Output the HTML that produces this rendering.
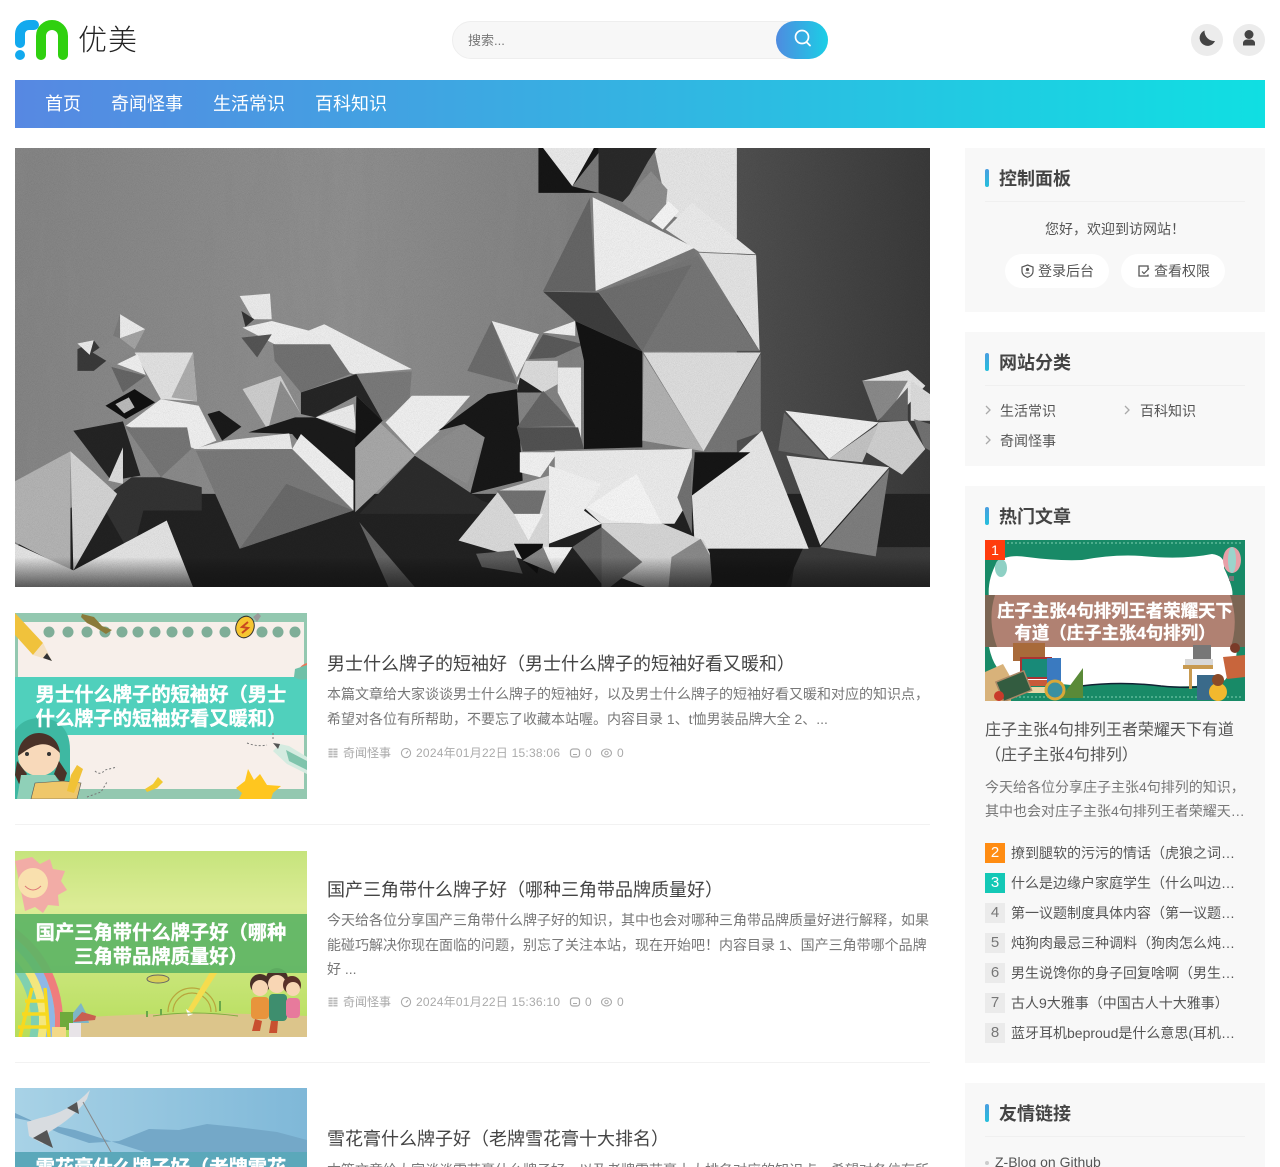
<!DOCTYPE html>
<html lang="zh-CN"><head><meta charset="utf-8"><title>优美</title>
<style>
html{margin:0;padding:0;background:#fff;width:1280px;height:1167px;overflow:hidden}
body{margin:0;padding:0;background:#fff;width:1280px;height:1167px;overflow:hidden;font-family:"Liberation Sans","Noto Sans CJK SC",sans-serif;color:#555}
#p{position:relative;width:1280px;height:1167px;overflow:hidden}
.a{position:absolute;white-space:nowrap}
svg{position:absolute;display:block;overflow:hidden}
.nav{font-size:18px;color:#fff;top:92px;line-height:24px}
.box{position:absolute;left:965px;width:300px;background:#f8f8f8}
.bar{position:absolute;left:985px;width:4px;height:18px;border-radius:2px;background:linear-gradient(#4a9ee0,#25bfdc)}
.st{position:absolute;left:999px;font-size:18px;line-height:24px;font-weight:700;color:#444;white-space:nowrap}
.ln{position:absolute;left:985px;width:260px;height:1px;background:#f0f0f0}
.t{font-size:18px;color:#444;left:327px;line-height:24px}
.s{font-size:14px;color:#777;left:327px;line-height:25px}
.m{font-size:12px;color:#aaa;line-height:16px}
.d{letter-spacing:.24px}
.hr{position:absolute;left:15px;width:915px;height:1px;background:#f2f2f2}
.btn{position:absolute;top:254px;width:104px;height:34px;border-radius:17px;background:#fff}
.n{position:absolute;left:985px;width:20px;height:20px;font:15px/20px "Liberation Sans",sans-serif;text-align:center;background:#ebebeb;color:#777}
.h{position:absolute;left:1011px;width:226px;font-size:14px;line-height:20px;color:#555;white-space:nowrap;overflow:hidden;text-overflow:ellipsis}
.c{font-size:13px;color:#555;line-height:20px}
.b{stroke:#fff;stroke-width:.35px}
</style></head><body><div id="p">

<svg style="left:10px;top:15px" width="65" height="50" viewBox="10 15 65 50"><path d="M41 55V36A11 11 0 0 1 63 36V55" fill="none" stroke="#2fd00f" stroke-width="10" stroke-linecap="round"/><path d="M20 43V34A9 9 0 0 1 29 25H34" fill="none" stroke="#12a9ee" stroke-width="10" stroke-linecap="round"/><circle cx="20" cy="55" r="5" fill="#12a9ee"/></svg>
<div class="a" style="left:78px;top:21px;font-size:29px;line-height:40px;color:#222;font-weight:300;letter-spacing:1px">优美</div>

<div class="a" style="left:452px;top:21px;width:374px;height:36px;border:1px solid #eee;border-radius:19px;background:#f7f7f7"></div>
<div class="a" style="left:468px;top:32px;font-size:13px;line-height:18px;color:#777">搜索...</div>
<div class="a" style="left:776px;top:21px;width:52px;height:38px;border-radius:19px;background:linear-gradient(90deg,#4e8be0,#1bcfe6)"></div>
<svg style="left:790px;top:26px" width="26" height="26" viewBox="0 0 26 26"><circle cx="12" cy="11" r="6.500" fill="none" stroke="#fff" stroke-width="1.700"/><path d="M17 16.500l3 3" stroke="#fff" stroke-width="1.800" stroke-linecap="round"/></svg>

<div class="a" style="left:1191px;top:24px;width:32px;height:32px;border-radius:50%;background:#ececec"></div>
<svg style="left:1191px;top:24px" width="32" height="32" viewBox="0 0 32 32"><path d="M13.500 6.500A8 8 0 1 0 24 17 10 10 0 0 1 13.500 6.500Z" fill="#444"/></svg>
<div class="a" style="left:1233px;top:24px;width:32px;height:32px;border-radius:50%;background:#ececec"></div>
<svg style="left:1233px;top:24px" width="32" height="32" viewBox="0 0 32 32"><circle cx="16" cy="10.500" r="4.500" fill="#444"/><path d="M10 21.500v-2.500c0-2 2-3.500 4-3.500h4c2 0 4 1.500 4 3.500v2.500Z" fill="#444"/></svg>

<div class="a" style="left:15px;top:80px;width:1250px;height:48px;background:linear-gradient(90deg,#5788e2,#10dfe2)"></div>
<div class="a nav" style="left:45px">首页</div>
<div class="a nav" style="left:111px">奇闻怪事</div>
<div class="a nav" style="left:213px">生活常识</div>
<div class="a nav" style="left:315px">百科知识</div>

<!-- hero -->
<svg style="left:15px;top:148px" width="915" height="439" viewBox="0 0 1568 1320" preserveAspectRatio="none">
<defs>
<linearGradient id="w" x1="0" x2="1" y1="0" y2="0"><stop offset="0" stop-color="#858585"/><stop offset=".45" stop-color="#909090"/><stop offset=".8" stop-color="#808080"/><stop offset="1" stop-color="#747474"/></linearGradient>
<linearGradient id="r" x1="0" x2="1" y1="0" y2="0"><stop offset="0" stop-color="#505050"/><stop offset="1" stop-color="#3a3a3a"/></linearGradient>
<linearGradient id="f" x1="0" x2="0" y1="0" y2="1"><stop offset="0" stop-color="#000" stop-opacity="0"/><stop offset="1" stop-color="#111" stop-opacity=".65"/></linearGradient>
<filter id="st" x="0" y="0" width="100%" height="100%"><feTurbulence type="fractalNoise" baseFrequency=".035 .004" numOctaves="3" seed="4"/><feColorMatrix values="0 0 0 0 .25 0 0 0 0 .25 0 0 0 0 .25 .8 0 0 0 -.3"/></filter>
<filter id="gr" x="0" y="0" width="100%" height="100%"><feTurbulence type="fractalNoise" baseFrequency=".7" numOctaves="2" seed="2"/><feColorMatrix values="0 0 0 0 0 0 0 0 0 0 0 0 0 0 0 .9 0 0 0 -.32"/></filter>
</defs>
<rect width="1240" height="1320" fill="url(#w)"/>
<rect width="1240" height="1000" filter="url(#st)"/>
<rect x="1237" width="331" height="1320" fill="url(#r)"/>
<path d="M1095 0H1237V272L1120 200Z" fill="#e6e6e6"/>
<!-- floor shadow -->
<path d="M130 1040H1568V1320H0V1200Z" fill="#222"/>
<path d="M1340 1200H1568V1320H1330Z" fill="#3c3c3c"/>
<!-- left cluster -->
<path d="M107 605L135 578 160 635 135 670H107Z" fill="#3a3a3a"/><path d="M107 588L135 578 128 622Z" fill="#eaeaea"/>
<path d="M180 500L223 545 180 572Z" fill="#ececec"/><path d="M180 500L168 565 180 572Z" fill="#7c7c7c"/><path d="M180 572L223 545 205 605Z" fill="#a4a4a4"/>
<path d="M133 615L172 568 205 605 168 652Z" fill="#8a8a8a"/>
<path d="M205 615H305L312 762 250 755Z" fill="#e2e2e2"/><path d="M305 615L312 762 268 750Z" fill="#aeaeae"/>
<path d="M175 650L210 620 224 682Z" fill="#f0f0f0"/><path d="M165 658L224 685 185 735Z" fill="#666"/>
<path d="M155 775L205 725 240 765 190 815Z" fill="#111"/><path d="M172 770L195 750 205 780 187 798Z" fill="#bbb"/>
<path d="M190 835L250 755 315 775 345 880 310 905Z" fill="#f0f0f0"/>
<path d="M330 800L350 790 388 838 355 880Z" fill="#1a1a1a"/>
<path d="M100 850L185 822 215 985 165 1000Z" fill="#242424"/>
<path d="M160 1000L185 900V1010Z" fill="#ddd"/>
<path d="M190 840H295L302 905 250 990Z" fill="#767676"/>
<path d="M145 1060L200 990H250L320 1020V1090H220L200 1228Z" fill="#333"/>
<path d="M0 1002L95 912V1270L0 1185Z" fill="#b4b4b4"/><path d="M95 912L175 1040 100 1270Z" fill="#d4d4d4"/>
<path d="M0 1190L100 1270 260 1120 305 1320H0Z" fill="#e4e4e4"/>
<!-- second cluster -->
<path d="M385 445L437 438 440 515 408 515Z" fill="#ececec"/><path d="M388 490L410 515 395 538Z" fill="#333"/>
<path d="M390 540L440 520 505 550 445 590Z" fill="#f0f0f0"/><path d="M388 570L440 560 415 630Z" fill="#555"/>
<path d="M445 590L530 530 680 665 580 680Z" fill="#eeeeee"/>
<path d="M442 590H540L575 680 490 735 445 640Z" fill="#727272"/>
<path d="M575 680L680 672 675 780 630 820Z" fill="#7a7a7a"/>
<path d="M390 725L455 685 490 800 430 838Z" fill="#cecece"/><path d="M455 700L490 800 435 838Z" fill="#8e8e8e"/>
<path d="M490 735L585 680 630 820 585 745 515 810 490 800Z" fill="#262626"/>
<path d="M515 810L580 770 585 850Z" fill="#ececec"/>
<path d="M400 855L480 810H515L585 860V1090L475 860Z" fill="#1b1b1b"/>
<path d="M305 905L360 880 470 858 475 905Z" fill="#ececec"/>
<path d="M310 910L475 905 580 1090 385 1205Z" fill="#7a7a7a"/><path d="M385 1205L465 1010 580 1090Z" fill="#6a6a6a"/>
<path d="M475 905L490 860 580 1000V1090Z" fill="#f0f0f0"/>
<path d="M590 1100L685 925 800 1060 860 1100Z" fill="#2c2c2c"/>
<path d="M583 1095V900L625 825 685 925Z" fill="#a8a8a8"/>
<path d="M585 745L630 820 583 900Z" fill="#161616"/>
<path d="M635 825L680 745H780L728 850 685 920Z" fill="#f0f0f0"/>
<path d="M685 925L770 830 805 870 775 1010Z" fill="#8e8e8e"/>
<path d="M725 850L810 740 860 725 870 1000 780 1040 805 870 770 830Z" fill="#181818"/>
<path d="M590 1125L685 1320H640Z" fill="#666"/>
<!-- center small -->
<path d="M817 520L775 670 860 710Z" fill="#6c6c6c"/><path d="M817 520L898 560 860 690Z" fill="#eeeeee"/>
<path d="M905 560L975 590 925 630 880 635Z" fill="#5a5a5a"/><path d="M960 520V565L905 555Z" fill="#f0f0f0"/>
<path d="M875 640H930V710L905 735 860 710Z" fill="#dcdcdc"/><path d="M865 690L905 735H860Z" fill="#222"/>
<path d="M905 730L960 835 860 840Z" fill="#646464"/>
<path d="M930 660H970V900L960 835 930 735Z" fill="#ececec"/>
<path d="M860 840H965L975 905 870 912Z" fill="#525252"/>
<!-- tower -->
<path d="M897 0H1000V135H897Z" fill="#161616"/><path d="M905 0H992L955 115Z" fill="#eaeaea"/><path d="M1000 15L955 115 1000 135 1045 100Z" fill="#7c7c7c"/>
<path d="M1000 0H1100L1085 40 1045 165 1000 135Z" fill="#2a2a2a"/>
<path d="M1090 70L1118 125 1115 180 1085 220 1040 165Z" fill="#8e8e8e"/>
<path d="M960 520L1075 612V900L975 905 975 640Z" fill="#141414"/>
<path d="M905 432L1000 435 1075 612 960 520Z" fill="#3e3e3e"/>
<path d="M1160 165L1270 320 1172 312 1115 245Z" fill="#ebebeb"/>
<path d="M1120 160L1138 190 1110 245 1090 220Z" fill="#f6f6f6"/>
<path d="M1172 315L1270 322 1276 610Z" fill="#e4e4e4"/>
<path d="M1000 432L1170 325 1276 610H1075Z" fill="#767676"/>
<path d="M1000 432L1160 350 1075 610Z" fill="#6e6e6e"/>
<path d="M990 148L1165 300 995 430Z" fill="#f0f0f0"/>
<path d="M985 150L995 432 905 430Z" fill="#666"/>
<path d="M1077 615H1278L1180 912Z" fill="#dedede"/>
<path d="M1278 620V855L1180 915Z" fill="#767676"/>
<path d="M1077 620L1180 912 1075 880Z" fill="#b2b2b2"/>
<!-- right -->
<path d="M1320 790L1480 825 1395 935Z" fill="#f0f0f0"/><path d="M1318 795L1392 935 1308 910Z" fill="#686868"/>
<path d="M1452 700L1530 668 1560 715 1505 820Z" fill="#e4e4e4"/><path d="M1452 700H1530L1500 790 1478 820Z" fill="#8a8a8a"/><path d="M1530 720V820H1480Z" fill="#626262"/>
<path d="M1535 700L1568 740V820H1535Z" fill="#dcdcdc"/>
<path d="M1480 825L1530 820 1560 905 1520 982 1450 905Z" fill="#d0d0d0"/><path d="M1540 815L1568 830V910L1558 900Z" fill="#727272"/>
<path d="M1395 935L1480 830 1452 945Z" fill="#c4c4c4"/>
<path d="M1160 1045L1280 850 1360 1205H1165Z" fill="#e8e8e8"/>
<path d="M1322 925L1498 960 1380 1195Z" fill="#e4e4e4"/>
<path d="M1498 965L1475 1228 1380 1200Z" fill="#7e7e7e"/>
<path d="M1165 915H1260L1160 1045Z" fill="#161616"/>
<!-- lower center -->
<path d="M865 915H930L900 990 865 975Z" fill="#f2f2f2"/>
<path d="M925 912L1160 905V1045L1130 1130H1005L925 1000Z" fill="#ececec"/>
<path d="M1135 1050L1160 930V1160Z" fill="#727272"/>
<path d="M760 1180L830 1030 915 985V1260Z" fill="#dadada"/>
<path d="M825 1030H910L895 1125 855 1100Z" fill="#727272"/>
<path d="M855 1100H905L880 1180Z" fill="#f4f4f4"/>
<path d="M915 955L1005 1010 975 1090 1005 1130 915 1190Z" fill="#f2f2f2"/>
<path d="M980 1080L1065 980 1110 1135 1020 1120Z" fill="#f6f6f6"/>
<path d="M855 1190H905L895 1280 870 1240Z" fill="#111"/>
<path d="M905 1200H955L925 1280Z" fill="#f4f4f4"/><path d="M870 1240L905 1200 925 1280Z" fill="#868686"/>
<path d="M1005 1130H1110L1180 1180 1205 1270 1190 1320H1080L1005 1270Z" fill="#d6d6d6"/>
<path d="M1125 1230L1175 1175 1205 1270 1190 1320H1120Z" fill="#8a8a8a"/>
<path d="M955 1200L1005 1140V1310Z" fill="#626262"/>
<path d="M1005 1140L1075 1245 1020 1320H1005Z" fill="#727272"/>
<path d="M790 1220L855 1210 870 1280 800 1260Z" fill="#606060"/>
<path d="M1190 1205H1350L1320 1320H1195Z" fill="#1a1a1a"/>
<rect width="1568" height="1320" filter="url(#gr)" opacity=".2"/>
<rect y="1230" width="1568" height="90" fill="url(#f)"/>
</svg>

<!-- article 1 -->
<svg style="left:15px;top:613px" width="292" height="186" viewBox="0 0 292 186">
<rect width="292" height="186" fill="#f7efea"/>
<path d="M0 0H292V9H0ZM0 0H3V186H0ZM0 176H292V186H0ZM289 0H292V186H289Z" fill="#93c8b0"/>
<g fill="#7fae98"><circle cx="34" cy="19" r="5.500"/><circle cx="53" cy="19" r="5.500"/><circle cx="72" cy="19" r="5.500"/><circle cx="90" cy="19" r="5.500"/><circle cx="107" cy="19" r="5.500"/><circle cx="123" cy="19" r="5.500"/><circle cx="140" cy="19" r="5.500"/><circle cx="157" cy="19" r="5.500"/><circle cx="173" cy="19" r="5.500"/><circle cx="192" cy="19" r="5.500"/><circle cx="210" cy="19" r="5.500"/><circle cx="247" cy="19" r="5.500"/><circle cx="263" cy="19" r="5.500"/><circle cx="280" cy="19" r="5.500"/></g>
<path d="M0 0L28 30 18 42 0 22Z" fill="#f0c23c"/><path d="M28 30L37 48 18 42Z" fill="#f4e0c0"/><path d="M32 40L37 48 28 45Z" fill="#333"/>
<path d="M67 1l12 3 8 9 10 4-6 4-11-7-8-4-6-6Z" fill="#8a7a3a"/>
<ellipse cx="230" cy="14" rx="9" ry="11" fill="#f6c531" stroke="#333" transform="rotate(20 230 14)"/><path d="M233 9l-6 5 6 1-6 5" fill="none" stroke="#c9491f" stroke-width="2"/><path d="M238 4l5-4 3 3-4 6Z" fill="#999"/>
<path d="M292 50c-8 2-11 10-10 18 0 6 4 12 10 13Z" fill="#e8785a"/>
<rect y="64" width="292" height="58" fill="#50d0bc"/>
<path d="M279 64q6 4 13 2v-14l-12 4Z" fill="#6fc0a8"/>
<path d="M265 131l9 2 18 11v17l-20-10-14-13Z" fill="#d4ebe0"/><path d="M271 137l21 11v9l-18-9Z" fill="#7fc4ac"/><path d="M258 130l7 1-2 5Z" fill="#555"/>
<path d="M233 156l-3 12-9 7 6 5-3 6h32l2-6 8-7-14-1-7-11-6 6Z" fill="#ffc61f"/>
<path d="M130 176l8-5 5-7 5 5-6 6-10 4Z" fill="#f2c92f"/>
<path d="M232 130q10 4 20 2M258 120v6M80 158q5 5 10-1l12-3M72 184l14-5 6-10" fill="none" stroke="#777" stroke-dasharray="2 2"/>
<path d="M-4 186V135c0-22 14-30 29-30s30 8 30 32v49Z" fill="#3eb8a2"/>
<ellipse cx="24" cy="143" rx="21" ry="20" fill="#f8d9ba"/>
<path d="M3 143c0-14 10-23 21-23s20 8 21 20c-8-8-14-10-22-8-6 1-13 6-20 11Z" fill="#4a3228"/>
<circle cx="12" cy="141" r="2" fill="#333"/><circle cx="34" cy="141" r="2" fill="#333"/>
<path d="M2 148l-2 14 4 9 8-10ZM44 148l8 12-4 12-9-11Z" fill="#4a3228"/>
<path d="M6 162h34l8 14 4 10H2Z" fill="#8fd0b8"/>
<path d="M16 186l4-16 28-2 18 2-4 16Z" fill="#efc76a" stroke="#555" stroke-width=".6"/>
<path d="M52 178l4-16 6-10 6 4-5 14-4 10Z" fill="#f1c236"/>
<text class="b" x="146" y="88" text-anchor="middle" font-size="19.300" font-weight="700" fill="#fff">男士什么牌子的短袖好（男士</text>
<text class="b" x="146" y="112" text-anchor="middle" font-size="19.300" font-weight="700" fill="#fff">什么牌子的短袖好看又暖和）</text>
</svg>
<div class="a t" style="top:652px">男士什么牌子的短袖好（男士什么牌子的短袖好看又暖和）</div>
<div class="a s" style="top:682px">本篇文章给大家谈谈男士什么牌子的短袖好，以及男士什么牌子的短袖好看又暖和对应的知识点，</div>
<div class="a s" style="top:707px">希望对各位有所帮助，不要忘了收藏本站喔。内容目录 1、t恤男装品牌大全 2、...</div>
<svg style="left:327px;top:747px" width="12" height="12" viewBox="0 0 12 12"><path d="M1.500 1.500h9v9h-9z" fill="#bbb"/><path d="M6 1v10M1 6h10M1 3.500h10M1 8.500h10" stroke="#fff" stroke-width=".7"/></svg>
<div class="a m" style="left:343px;top:745px">奇闻怪事</div>
<svg style="left:400px;top:747px" width="12" height="12" viewBox="0 0 12 12"><circle cx="6" cy="6" r="4.600" fill="none" stroke="#aaa" stroke-width="1.100"/><path d="M8 4L6 6.500" stroke="#aaa" stroke-width="1.100"/></svg>
<div class="a m d" style="left:416px;top:745px">2024年01月22日 15:38:06</div>
<svg style="left:569px;top:747px" width="12" height="12" viewBox="0 0 12 12"><rect x="1.500" y="2" width="9" height="8" rx="2.500" fill="none" stroke="#aaa" stroke-width="1.200"/><path d="M4 7.500h4" stroke="#aaa"/></svg>
<div class="a m" style="left:585px;top:745px">0</div>
<svg style="left:600px;top:747px" width="13" height="12" viewBox="0 0 13 12"><ellipse cx="6.500" cy="6" rx="5" ry="4" fill="none" stroke="#aaa" stroke-width="1.100"/><circle cx="6.500" cy="6" r="1.700" fill="none" stroke="#aaa"/></svg>
<div class="a m" style="left:617px;top:745px">0</div>
<div class="hr" style="top:824px"></div>

<!-- article 2 -->
<svg style="left:15px;top:851px" width="292" height="186" viewBox="0 0 292 186">
<defs><linearGradient id="g2" x1="0" y1="0" x2="0" y2="1"><stop offset="0" stop-color="#c6e47c"/><stop offset=".3" stop-color="#dcec96"/><stop offset="1" stop-color="#b6de5c"/></linearGradient></defs>
<rect width="292" height="186" fill="url(#g2)"/>
<g fill="none" stroke-width="8"><circle cx="-66" cy="170" r="110" stroke="#ef7d7d"/><circle cx="-66" cy="170" r="102" stroke="#8fb8e6"/><circle cx="-66" cy="170" r="94" stroke="#f4e77d"/><circle cx="-66" cy="170" r="86" stroke="#7fd0b0"/></g>
<path d="M60 167q110-8 232-2v21H60Z" fill="#dcc58b"/>
<path d="M17 6l8 7 10-5 3 10 12 2-4 10 6 9-9 5 1 11-11-1-5 8-8-6-10 4L0 10Z" fill="#f2aca6"/><circle cx="18" cy="32" r="15" fill="#f9e0ae"/><path d="M10 35q8 8 16 0" fill="none" stroke="#d77"/>
<path d="M17 137l-12 49M30 137l4 49M10 150h22M7 163h26M3 176h32" stroke="#f7d91f" stroke-width="3.500" fill="none"/>
<rect x="45" y="161" width="14" height="18" fill="#6eaa3c"/><rect x="37" y="176" width="14" height="10" fill="#f3d988"/><rect x="54" y="172" width="12" height="14" fill="#e8e4e8"/>
<path d="M58 172h16l-2-8-6-12-8 10Z" fill="#7eb6c6"/><path d="M58 171l22-2 1-4-14-4Z" fill="#c95f50"/>
<g fill="none" stroke="#b8a63c" stroke-width="1.200"><path d="M158 161a19 19 0 0 1 38 0"/><path d="M153 161a24 24 0 0 1 48 0"/></g>
<path d="M172 160l26-44 6 3-28 44-5-1Z" fill="#f5dc4e"/><path d="M171 158l2 7 5-2Z" fill="#fff"/>
<path d="M138 165q40-6 85 0" fill="none" stroke="#7eae40"/>
<ellipse cx="143" cy="128" rx="11" ry="4" fill="#d8cf58" stroke="#666"/><path d="M205 150v10M146 158v6M132 160v6" stroke="#6aa84a" stroke-width="2"/>
<circle cx="245" cy="133" r="10" fill="#4a3028"/><circle cx="245" cy="137" r="8" fill="#f8d6b4"/>
<circle cx="262" cy="128" r="11" fill="#4a3028"/><circle cx="262" cy="133" r="9" fill="#f8d6b4"/>
<circle cx="277" cy="134" r="9" fill="#5a3028"/><circle cx="278" cy="138" r="7" fill="#f8d6b4"/>
<rect x="236" y="146" width="18" height="22" rx="4" fill="#e8943c"/><rect x="254" y="143" width="18" height="27" rx="4" fill="#3e8e6e"/><rect x="271" y="147" width="14" height="20" rx="4" fill="#e77a9c"/>
<path d="M240 168l-3 12h8l2-10ZM256 170l-2 12h8l1-12Z" fill="#c85030"/>
<rect y="63" width="292" height="59" fill="#5fb565" opacity=".93"/>
<text class="b" x="146" y="88" text-anchor="middle" font-size="19.300" font-weight="700" fill="#fff">国产三角带什么牌子好（哪种</text>
<text class="b" x="146" y="112" text-anchor="middle" font-size="19.300" font-weight="700" fill="#fff">三角带品牌质量好）</text>
</svg>
<div class="a t" style="top:878px">国产三角带什么牌子好（哪种三角带品牌质量好）</div>
<div class="a s" style="top:908px">今天给各位分享国产三角带什么牌子好的知识，其中也会对哪种三角带品牌质量好进行解释，如果</div>
<div class="a s" style="top:933px">能碰巧解决你现在面临的问题，别忘了关注本站，现在开始吧！内容目录 1、国产三角带哪个品牌</div>
<div class="a s" style="top:957px">好 ...</div>
<svg style="left:327px;top:996px" width="12" height="12" viewBox="0 0 12 12"><path d="M1.500 1.500h9v9h-9z" fill="#bbb"/><path d="M6 1v10M1 6h10M1 3.500h10M1 8.500h10" stroke="#fff" stroke-width=".7"/></svg>
<div class="a m" style="left:343px;top:994px">奇闻怪事</div>
<svg style="left:400px;top:996px" width="12" height="12" viewBox="0 0 12 12"><circle cx="6" cy="6" r="4.600" fill="none" stroke="#aaa" stroke-width="1.100"/><path d="M8 4L6 6.500" stroke="#aaa" stroke-width="1.100"/></svg>
<div class="a m d" style="left:416px;top:994px">2024年01月22日 15:36:10</div>
<svg style="left:569px;top:996px" width="12" height="12" viewBox="0 0 12 12"><rect x="1.500" y="2" width="9" height="8" rx="2.500" fill="none" stroke="#aaa" stroke-width="1.200"/><path d="M4 7.500h4" stroke="#aaa"/></svg>
<div class="a m" style="left:585px;top:994px">0</div>
<svg style="left:600px;top:996px" width="13" height="12" viewBox="0 0 13 12"><ellipse cx="6.500" cy="6" rx="5" ry="4" fill="none" stroke="#aaa" stroke-width="1.100"/><circle cx="6.500" cy="6" r="1.700" fill="none" stroke="#aaa"/></svg>
<div class="a m" style="left:617px;top:994px">0</div>
<div class="hr" style="top:1062px"></div>

<!-- article 3 -->
<svg style="left:15px;top:1088px" width="292" height="79" viewBox="0 0 292 79">
<defs><linearGradient id="g3" x1="0" y1="0" x2="1" y2="0"><stop offset="0" stop-color="#a8d2e6"/><stop offset="1" stop-color="#7fb8d8"/></linearGradient></defs>
<rect width="292" height="79" fill="url(#g3)"/>
<path d="M0 30l60 12 70 22h162V52l-30-8-40-5-30-3-28 6-30-1-30 12-30 2-30-10L0 25Z" fill="#74a8c8"/>
<path d="M25 30q30-6 50-28l-3 9q-12 18-38 33l-6 12-14-8-2-14Z" fill="#d8dce0"/>
<path d="M52 20l10-6 2 12ZM18 50l14-8 6 18Z" fill="#555"/>
<path d="M68 14l28 50" stroke="#888" fill="none"/>
<rect y="64" width="292" height="15" fill="#5ba8ba"/>
<text class="b" x="146" y="86" text-anchor="middle" font-size="19.300" font-weight="700" fill="#fff">雪花膏什么牌子好（老牌雪花</text>
</svg>
<div class="a t" style="top:1127px">雪花膏什么牌子好（老牌雪花膏十大排名）</div>
<div class="a s" style="top:1158px">本篇文章给大家谈谈雪花膏什么牌子好，以及老牌雪花膏十大排名对应的知识点，希望对各位有所</div>

<!-- sidebar 1 -->
<div class="box" style="top:148px;height:164px"></div>
<div class="bar" style="top:169px"></div><div class="st" style="top:167px">控制面板</div><div class="ln" style="top:201px"></div>
<div class="a c" style="left:1045px;top:219px;font-size:14px;line-height:20px">您好，欢迎到访网站！</div>
<div class="btn" style="left:1005px"></div><div class="btn" style="left:1121px"></div>
<svg style="left:1021px;top:264px" width="13" height="14" viewBox="0 0 13 14"><path d="M6.500 1L12 3v4.500c0 3-2.500 4.800-5.500 5.800C3.500 12.300 1 10.500 1 7.500V3Z" fill="none" stroke="#555" stroke-width="1.200"/><circle cx="6.500" cy="5.500" r="1.600" fill="#555"/><path d="M3.800 9.500c.5-1.500 5-1.500 5.400 0Z" fill="#555"/></svg>
<div class="a" style="left:1038px;top:261px;font-size:14px;line-height:20px;color:#555">登录后台</div>
<svg style="left:1137px;top:264px" width="14" height="14" viewBox="0 0 14 14"><path d="M11 5.500V2H2v10h9V10.500" fill="none" stroke="#555" stroke-width="1.300"/><path d="M5 7.500l2 2 5-5" fill="none" stroke="#555" stroke-width="1.200"/></svg>
<div class="a" style="left:1154px;top:261px;font-size:14px;line-height:20px;color:#555">查看权限</div>

<!-- sidebar 2 -->
<div class="box" style="top:332px;height:134px"></div>
<div class="bar" style="top:353px"></div><div class="st" style="top:351px">网站分类</div><div class="ln" style="top:385px"></div>
<svg style="left:985px;top:405px" width="6" height="10" viewBox="0 0 6 10"><path d="M1 1l4 4-4 4" fill="none" stroke="#aaa" stroke-width="1.300"/></svg>
<svg style="left:1124px;top:405px" width="6" height="10" viewBox="0 0 6 10"><path d="M1 1l4 4-4 4" fill="none" stroke="#aaa" stroke-width="1.300"/></svg>
<svg style="left:985px;top:435px" width="6" height="10" viewBox="0 0 6 10"><path d="M1 1l4 4-4 4" fill="none" stroke="#aaa" stroke-width="1.300"/></svg>
<div class="a c" style="left:1000px;top:401px;font-size:14px">生活常识</div>
<div class="a c" style="left:1140px;top:401px;font-size:14px">百科知识</div>
<div class="a c" style="left:1000px;top:431px;font-size:14px">奇闻怪事</div>

<!-- sidebar 3 -->
<div class="box" style="top:486px;height:577px"></div>
<div class="bar" style="top:507px"></div><div class="st" style="top:505px">热门文章</div>
<svg style="left:985px;top:540px" width="260" height="161" viewBox="0 0 260 161">
<rect width="260" height="161" fill="#188a67"/>
<path d="M2 3H258M2 157H258" stroke="#7fd0b0" stroke-dasharray="2 2"/>
<path d="M12 22q10-8 30-5 30 4 55 3 32-6 60-4 40 4 70-2 14 2 12 14 12 25 7 30H4Q2 40 12 22Z" fill="#fff"/>
<path d="M4 107q5 25 22 32l70 7q40-5 80 0 50 2 64-6 12-15 12-33Z" fill="#fff"/>
<path d="M96 146q40-5 80 0 40 4 62-4" stroke="#123" stroke-width="1.500" fill="none"/>
<rect y="55" width="260" height="52" fill="#7b6553"/>
<path d="M10 55H245Q254 80 246 107H12Q2 80 10 55Z" fill="#b08172"/>
<ellipse cx="16" cy="28" rx="6" ry="9" fill="#8ed0c4"/>
<ellipse cx="247" cy="20" rx="9" ry="13" fill="#e8a0a8"/><ellipse cx="247" cy="20" rx="4" ry="13" fill="#9bd4cc"/><rect x="244" y="36" width="5" height="5" fill="#777"/>
<path d="M0 132l18-8 8 14v23H0Z" fill="#d8b27a"/>
<rect x="28" y="103" width="32" height="18" fill="#a86a3a"/>
<rect x="36" y="118" width="30" height="20" fill="#188a78" stroke="#a33" stroke-width="2"/>
<rect x="40" y="140" width="26" height="6" fill="#c85a3a"/><rect x="40" y="147" width="28" height="6" fill="#e8d8a8"/>
<rect x="62" y="118" width="14" height="30" fill="#3a7ac0"/>
<rect x="14" y="136" width="30" height="21" fill="#335c40" stroke="#a86" stroke-width="1.500" transform="rotate(-22 28 147)"/>
<path d="M78 155l20-27v30H76Z" fill="#5a8a38"/><circle cx="70" cy="150" r="9" fill="#3a90a0" stroke="#d8a838" stroke-width="3"/>
<circle cx="14" cy="156" r="5" fill="#c83a2a"/>
<path d="M198 125h30v4h-30ZM204 129h3v20h-3Z" fill="#c89a50"/><rect x="208" y="105" width="18" height="14" fill="#777"/><rect x="200" y="119" width="28" height="6" fill="#d8d8d8"/>
<path d="M238 117l22-2v22l-18 2Z" fill="#c8653c"/><circle cx="250" cy="108" r="5" fill="#7a3a28"/>
<rect x="212" y="135" width="18" height="25" fill="#3a6a8a"/><ellipse cx="233" cy="152" rx="9" ry="9" fill="#f2b82e"/><circle cx="233" cy="140" r="6" fill="#8a4a28"/>
<text class="b" x="130" y="77" text-anchor="middle" font-size="17.400" font-weight="700" fill="#fff">庄子主张4句排列王者荣耀天下</text>
<text class="b" x="130" y="99" text-anchor="middle" font-size="17.400" font-weight="700" fill="#fff">有道（庄子主张4句排列）</text>
</svg>
<div class="a" style="left:985px;top:540px;width:20px;height:20px;background:#ff3c0d;color:#fff;font:14px/20px 'Liberation Sans',sans-serif;text-align:center">1</div>
<div class="a" style="left:985px;top:714px;font-size:16px;line-height:33px;color:#555">庄子主张4句排列王者荣耀天下有道</div>
<div class="a" style="left:985px;top:739px;font-size:16px;line-height:33px;color:#555">（庄子主张4句排列）</div>
<div class="a" style="left:985px;top:775px;font-size:14px;line-height:24px;color:#777">今天给各位分享庄子主张4句排列的知识，</div>
<div class="a" style="left:985px;top:799px;width:260px;overflow:hidden;text-overflow:ellipsis;font-size:14px;line-height:24px;color:#777">其中也会对庄子主张4句排列王者荣耀天下有道</div>

<div class="n" style="top:843px;background:#ff8c12;color:#fff">2</div><div class="h" style="top:843px">撩到腿软的污污的情话（虎狼之词让人腿软的情话）</div>
<div class="n" style="top:873px;background:#14c8b6;color:#fff">3</div><div class="h" style="top:873px">什么是边缘户家庭学生（什么叫边缘户家庭）</div>
<div class="n" style="top:903px">4</div><div class="h" style="top:903px">第一议题制度具体内容（第一议题制度是什么）</div>
<div class="n" style="top:933px">5</div><div class="h" style="top:933px">炖狗肉最忌三种调料（狗肉怎么炖才好吃）</div>
<div class="n" style="top:963px">6</div><div class="h" style="top:963px">男生说馋你的身子回复啥啊（男生说馋你身子）</div>
<div class="n" style="top:993px">7</div><div class="h" style="top:993px">古人9大雅事（中国古人十大雅事）</div>
<div class="n" style="top:1023px">8</div><div class="h" style="top:1023px">蓝牙耳机beproud是什么意思(耳机上的beproud)</div>

<!-- sidebar 4 -->
<div class="box" style="top:1083px;height:84px"></div>
<div class="bar" style="top:1104px"></div><div class="st" style="top:1102px">友情链接</div><div class="ln" style="top:1136px"></div>
<div class="a" style="left:985px;top:1161px;width:4px;height:4px;border-radius:50%;background:#ccc"></div>
<div class="a" style="left:995px;top:1152px;font-size:14px;line-height:20px;color:#555">Z-Blog on Github</div>
</div></body></html>
